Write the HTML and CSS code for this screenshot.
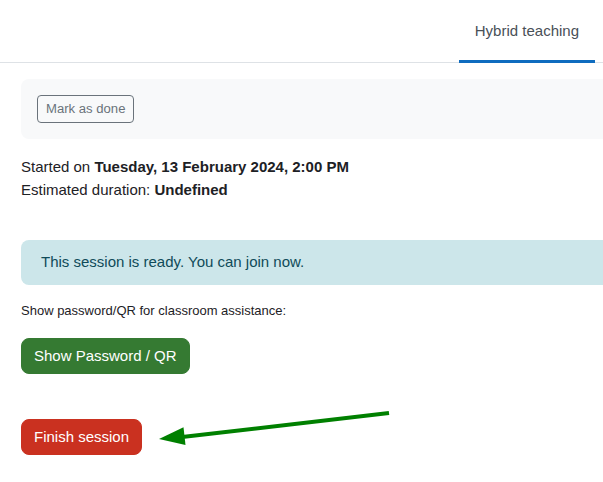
FILE: index.html
```html
<!DOCTYPE html>
<html lang="en">
<head>
<meta charset="utf-8">
<title>Hybrid teaching</title>
<link rel="stylesheet" href="styles.css">
</head>
<body>
<nav class="tabs">
  <a class="tab active" href="#">Hybrid teaching</a>
</nav>
<main class="content">
  <div class="activity-header">
    <button class="btn btn-outline">Mark as done</button>
  </div>
  <div class="info">
    <div>Started on <strong>Tuesday, 13 February 2024, 2:00 PM</strong></div>
    <div>Estimated duration: <strong>Undefined</strong></div>
  </div>
  <div class="alert">This session is ready. You can join now.</div>
  <p class="small">Show password/QR for classroom assistance:</p>
  <button class="btn btn-success">Show Password / QR</button>
  <button class="btn btn-danger">Finish session</button>
</main>
<svg class="arrow" width="250" height="60" viewBox="0 0 250 60" aria-hidden="true">
  <line x1="239" y1="13" x2="30" y2="37.3" stroke="#008000" stroke-width="4"/>
  <polygon points="9,39 33.5,27.2 35.5,45" fill="#008000"/>
</svg>
</body>
</html>
```
FILE: styles.css
```css
* { box-sizing: border-box; }
html, body { margin: 0; padding: 0; }
body {
  font-family: "Liberation Sans", Arial, sans-serif;
  font-size: 15px;
  line-height: 1.5;
  color: #1d2125;
  background: #fff;
  overflow: hidden;
}
.tabs {
  display: flex;
  justify-content: flex-end;
  padding-right: 8px;
  border-bottom: 1px solid #dee2e6;
}
.tab {
  display: block;
  padding: 20px 16px 17.5px;
  color: #495057;
  text-decoration: none;
  border-bottom: 3px solid transparent;
  margin-bottom: -1px;
}
.tab.active { border-bottom-color: #0f6cbf; }
.content {
  padding: 16px 0 0 21px;
  display: flex;
  flex-direction: column;
  align-items: flex-start;
}
.activity-header {
  align-self: stretch;
  background: #f8f9fa;
  border-radius: 8px 0 0 8px;
  padding: 16px;
  margin-right: -20px;
}
.btn {
  font-family: inherit;
  font-size: 15px;
  line-height: 22.5px;
  padding: 6px 12px;
  border: 1px solid transparent;
  border-radius: 8px;
  cursor: pointer;
}
.btn-outline {
  display: block;
  font-size: 13.125px;
  line-height: 18px;
  padding: 4px 8px;
  color: #6a737b;
  background: transparent;
  border-color: #6a737b;
  border-radius: 4px;
}
.info { margin-top: 17px; }
.alert {
  align-self: stretch;
  margin-top: 38.5px;
  margin-right: -20px;
  padding: 11.25px 20px;
  background: #cce6ea;
  color: #0f4b59;
  border-radius: 8px 0 0 8px;
}
.small {
  font-size: 13px;
  line-height: 1.5;
  margin: 16.5px 0 0;
}
.btn-success {
  margin-top: 17px;
  background: #357a32;
  border-color: #357a32;
  color: #fff;
}
.btn-danger {
  margin-top: 44.5px;
  background: #ca3120;
  border-color: #ca3120;
  color: #fff;
}
.arrow {
  position: absolute;
  left: 150px;
  top: 400px;
}
```
